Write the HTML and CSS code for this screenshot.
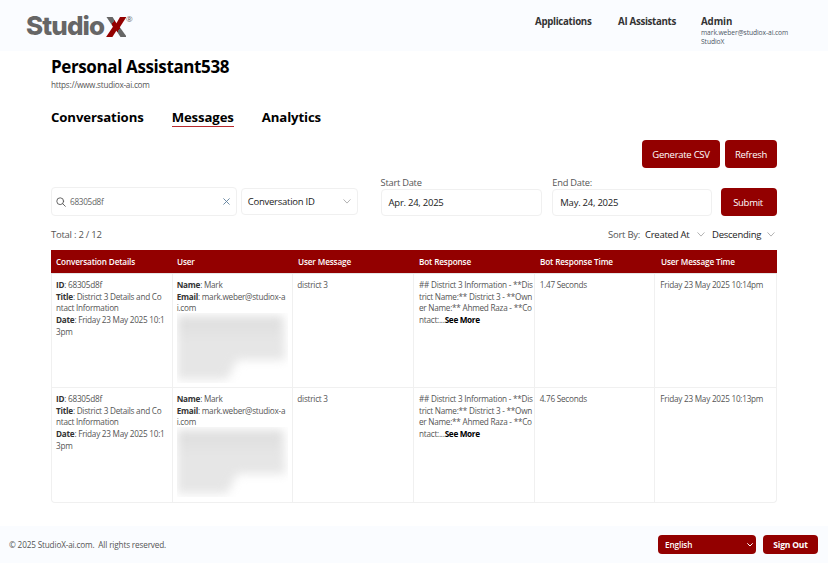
FILE: index.html
```html
<!DOCTYPE html>
<html lang="en">
<head>
<meta charset="utf-8">
<title>StudioX</title>
<link rel="stylesheet" href="styles.css">
</head>
<body>
<header class="top">
  <div class="logo"><span class="logo-word">Studio</span><span class="logo-x">X</span><span class="logo-reg">®</span></div>
  <nav class="nav">
    <a class="nav-apps">Applications</a>
    <a class="nav-ai">AI Assistants</a>
    <div class="account"><a>Admin</a><span class="mail">mark.weber@studiox-ai.com</span><span class="org">StudioX</span></div>
  </nav>
</header>
<main>
  <h1><span>Personal Assistant538</span></h1>
  <p class="url">https://www.studiox-ai.com</p>
  <nav class="tabs"><a>Conversations</a><a class="active">Messages</a><a>Analytics</a></nav>
  <div class="actions"><button class="btn csv">Generate CSV</button><button class="btn refresh">Refresh</button></div>
  <div class="filters">
    <div class="search">
      <svg width="10" height="10" viewBox="0 0 10 10"><circle cx="4.2" cy="4.2" r="3.4"/><path d="M6.7 6.7L9.3 9.3"/></svg>
      <span>68305d8f</span>
      <svg class="clear" width="7" height="7" viewBox="0 0 7 7"><path d="M.7 .7L6.3 6.3M6.3 .7L.7 6.3"/></svg>
    </div>
    <div class="field kind"><span>Conversation ID</span><svg class="chev" width="8" height="5" viewBox="0 0 8 5"><path d="M.8 .7L4 4.1L7.2 .7"/></svg></div>
    <div class="date start"><label>Start Date</label><div class="field"><span>Apr. 24, 2025</span></div></div>
    <div class="date end"><label>End Date:</label><div class="field"><span>May. 24, 2025</span></div></div>
    <button class="btn submit">Submit</button>
  </div>
  <div class="summary">
    <span class="total">Total : 2 / 12</span>
    <span class="sortby">Sort By:</span>
    <span class="sort1">Created At</span><svg class="chev" width="8" height="5" viewBox="0 0 8 5"><path d="M.8 .7L4 4.1L7.2 .7"/></svg>
    <span class="sort2">Descending</span><svg class="chev last" width="8" height="5" viewBox="0 0 8 5"><path d="M.8 .7L4 4.1L7.2 .7"/></svg>
  </div>
  <div class="table">
    <div class="row head"><div>Conversation Details</div><div>User</div><div>User Message</div><div>Bot Response</div><div>Bot Response Time</div><div>User Message Time</div></div>
    <div class="row">
      <div><b>ID</b>: 68305d8f<br><b>Title</b>: District 3 Details and Co<br>ntact Information<br><b>Date</b>: Friday 23 May 2025 10:1<br>3pm</div>
      <div><b>Name</b>: Mark<br><b>Email</b>: mark.weber@studiox-a<br>i.com<div class="redacted"><div class="haze"><i></i></div></div></div>
      <div>district 3</div>
      <div>## District 3 Information - **Dis<br>trict Name:** District 3 - **Own<br>er Name:** Ahmed Raza - **Co<br>ntact:...<b class="more">See More</b></div>
      <div>1.47 Seconds</div>
      <div>Friday 23 May 2025 10:14pm</div>
    </div>
    <div class="row">
      <div><b>ID</b>: 68305d8f<br><b>Title</b>: District 3 Details and Co<br>ntact Information<br><b>Date</b>: Friday 23 May 2025 10:1<br>3pm</div>
      <div><b>Name</b>: Mark<br><b>Email</b>: mark.weber@studiox-a<br>i.com<div class="redacted"><div class="haze"><i></i></div></div></div>
      <div>district 3</div>
      <div>## District 3 Information - **Dis<br>trict Name:** District 3 - **Own<br>er Name:** Ahmed Raza - **Co<br>ntact:...<b class="more">See More</b></div>
      <div>4.76 Seconds</div>
      <div>Friday 23 May 2025 10:13pm</div>
    </div>
  </div>
</main>
<footer>
  <span class="copy">© 2025 StudioX-ai.com.&nbsp; All rights reserved.</span>
  <div class="lang"><span>English</span><svg width="6" height="4" viewBox="0 0 6 4"><path d="M.6 .6L3 3L5.4 .6"/></svg></div>
  <button class="btn signout">Sign Out</button>
</footer>
</body>
</html>
```
FILE: styles.css
```css
* { box-sizing: border-box; }
body { margin: 0; width: 828px; height: 563px; display: flex; flex-direction: column; overflow: hidden; background: #fff; color: #555; font-family: "Open Sans", "Noto Sans", sans-serif; font-size: 9px; white-space: nowrap; }
h1, p { margin: 0; }
svg { display: block; flex: none; fill: none; stroke-linecap: round; }
.top { height: 51px; flex: none; background: #fafcff; display: flex; justify-content: space-between; }
.logo { display: flex; padding: 7px 0 0 26px; font-size: 26px; line-height: 38px; color: #666; }
.logo-word { font-family: Inter, sans-serif; font-weight: 800; width: 80px; letter-spacing: -0.9px; }
.logo-x { width: 20px; height: 38px; font-weight: 800; font-size: 29px; line-height: 37px; color: transparent; background-image: linear-gradient(122deg, #666 0 38%, #930000 38% 62%, #666 62%); -webkit-background-clip: text; background-clip: text; }
.logo-reg { font-size: 8px; line-height: 24px; }
.nav { display: flex; width: 293px; padding-top: 15px; color: #333; font-weight: 700; font-size: 9.7px; letter-spacing: -.3px; line-height: 13px; }
.nav-apps { width: 83px; }
.nav-ai { width: 83px; }
.account { display: flex; flex-direction: column; letter-spacing: -.08px; }
.account span { font-size: 6.7px; line-height: 9px; font-weight: 400; color: #4b5563; }
main { padding: 0 51px; flex: 1; }
h1 { font-size: 17px; letter-spacing: -.38px; line-height: 24px; margin-top: 4px; color: #000; font-weight: 700; }
.url { font-size: 8.2px; letter-spacing: -.25px; line-height: 11px; }
.tabs { display: flex; gap: 28px; margin-top: 18px; height: 19px; font-size: 13.2px; letter-spacing: -.12px; line-height: 18px; font-weight: 700; color: #000; }
.tabs a { height: 19px; }
.tabs .active { border-bottom: 1px solid #b8282c; }
.btn { border: 0; border-radius: 4px; background: #930000; color: #fff; font: 9.5px "Open Sans", sans-serif; letter-spacing: -.27px; height: 28px; padding: 0; white-space: nowrap; }
.actions { display: flex; justify-content: flex-end; gap: 5px; margin-top: 13px; }
.csv { width: 78px; }
.refresh { width: 52px; }
.filters { display: flex; align-items: flex-end; height: 48px; }
.search, .field { border: 1px solid #f0f0f0; border-radius: 4px; display: flex; align-items: center; height: 27px; color: #222; font-size: 9.5px; letter-spacing: -.25px; }
.search { width: 186px; height: 29px; padding: 0 6px 0 4px; gap: 4px; color: #666; font-size: 8.2px; letter-spacing: -.3px; stroke-width: .9; }
.search svg { stroke: #555; }
.search .clear { margin-left: auto; stroke: #5d7f9b; }
.kind { width: 117px; margin: 0 0 1px 4px; padding: 0 6px; justify-content: space-between; }
.chev { stroke: #aaa; stroke-width: .9; }
.date label { display: block; height: 12px; line-height: 12px; font-size: 9.3px; letter-spacing: -.25px; }
.date .field { padding-left: 7px; }
.start { width: 162px; margin-left: 23px; }
.end { width: 160px; margin-left: 10px; }
.submit { width: 56px; margin-left: 9px; padding-right: 2px; }
.summary { display: flex; align-items: center; height: 34px; padding-top: 2px; font-size: 9.5px; letter-spacing: -.25px; color: #222; }
.total { color: #555; margin-right: auto; }
.sortby { color: #555; width: 37px; }
.sort1 { width: 52px; }
.sort2 { width: 55px; margin-left: 7px; }
.last { margin-right: 2px; }
.table { border: 1px solid #f0f0f0; border-top: 0; border-radius: 0 0 4px 4px; }
.row { display: grid; grid-template-columns: repeat(6, minmax(0, 1fr)); height: 114px; font-size: 8.2px; letter-spacing: -.25px; line-height: 11.7px; color: #555; border-bottom: 1px solid #f0f0f0; }
.row:last-child { border-bottom: 0; }
.row > div { padding: 5px 0 0 4px; border-right: 1px solid #f0f0f0; }
.row > div:nth-child(n+4) { padding-left: 5px; }
.row > div:last-child { border-right: 0; }
.row b { color: #333; font-weight: 700; }
.row .more { color: #000; letter-spacing: -.32px; }
.head { height: 24px; margin: 0 -1px; background: #930000; color: #fff; font-weight: 600; letter-spacing: -.14px; border-bottom: 1px solid #e5e5e5; }
.head > div { padding: 6px 0 0 5px; border: 0; }
.redacted { width: 111px; height: 70px; overflow: hidden; margin-top: -1px; }
.haze { filter: blur(5px); }
.haze i { display: block; width: 110px; height: 70px; background: linear-gradient(#dcdcdc, #e6e6e6 40%); clip-path: polygon(0 4%, 97% 4%, 99% 67%, 55% 67%, 46% 95%, 0 95%); }
footer { height: 37px; flex: none; background: #fafcff; display: flex; align-items: center; padding: 0 10px 0 9px; font-size: 8.2px; letter-spacing: -.16px; }
.copy { margin-right: auto; }
.lang { display: flex; align-items: center; justify-content: space-between; width: 98px; height: 19px; padding: 0 3px 0 7px; background: #930000; border-radius: 4px; color: #fff; font-weight: 600; letter-spacing: -.1px; }
.lang svg { stroke: #fff; }
.signout { width: 55px; height: 19px; margin-left: 7px; font-size: 8.5px; font-weight: 700; letter-spacing: -.2px; }
```
